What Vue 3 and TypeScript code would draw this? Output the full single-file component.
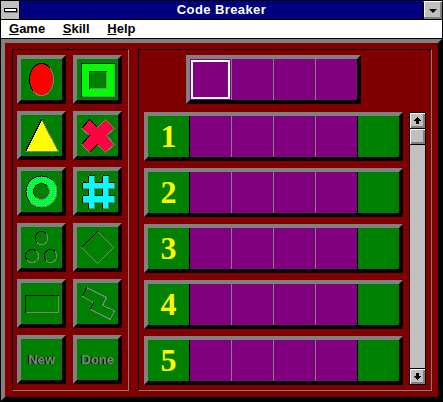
<script setup lang="ts">
const menus = ['Game', 'Skill', 'Help']
const rows = [1, 2, 3, 4, 5]
const cells = [0, 1, 2, 3]
const tools = ['oval', 'square', 'triangle', 'cross', 'ring', 'hash', 'dots', 'diamond', 'rect', 'zig', 'New', 'Done']
const isLabel = (t: string) => t === 'New' || t === 'Done'
</script>

<template>
  <div class="window">
    <div class="titlebar">
      <div class="sysbox"><div class="sysbar"></div></div>
      <div class="title">Code Breaker</div>
      <div class="minbox"><div class="tri"></div></div>
    </div>
    <div class="menubar">
      <span v-for="m in menus" :key="m" class="menu"><u>{{ m[0] }}</u>{{ m.slice(1) }}</span>
    </div>
    <div class="client">
      <div class="panel tools">
        <div v-for="t in tools" :key="t" class="btn">
          <span v-if="isLabel(t)" class="label">{{ t }}</span>
          <svg v-else class="icon" width="41" height="41" viewBox="0 0 41 41">
            <defs>
              <pattern id="pink" width="2" height="2" patternUnits="userSpaceOnUse">
                <rect width="2" height="2" fill="#ff0000" />
                <rect width="1" height="1" fill="#ff00ff" />
              </pattern>
              <pattern id="mint" width="2" height="2" patternUnits="userSpaceOnUse">
                <rect width="2" height="2" fill="#00ff00" />
                <rect width="1" height="1" fill="#00ffff" />
              </pattern>
            </defs>
            <g v-if="t === 'oval'">
              <ellipse cx="20.5" cy="20.5" rx="12" ry="16" fill="#ff0000" stroke="#808080" />
              <path class="k" d="M12 31.8A12 16 0 0 1 29 9.2" />
            </g>
            <g v-else-if="t === 'square'" transform="translate(.5 .5)">
              <path d="M4 4H37V37H4ZM12 12V29H29V12Z" fill="#00ff00" fill-rule="evenodd" />
              <path class="g" d="M37 4V37H4M29 12V29H12" />
              <path class="k" d="M4 37V4H37M12 29V12H29" />
            </g>
            <g v-else-if="t === 'triangle'" transform="translate(.5 .5)">
              <path d="M20 4L37 36H4Z" fill="#ffff00" stroke="#808080" />
              <path class="k" d="M4 36L20 4" />
            </g>
            <g v-else-if="t === 'cross'" transform="translate(.5 .5)">
              <path d="M12 4L20 12L28 4L37 13L29 20L37 29L28 37L20 29L12 37L4 29L12 20L4 13Z" fill="url(#pink)" stroke="#808080" />
              <path class="k" d="M4 13L12 4L20 12M4 29L12 20M20 29L12 37" />
            </g>
            <g v-else-if="t === 'ring'">
              <path d="M5 20.5a15.5 15.5 0 1 0 31 0a15.5 15.5 0 1 0-31 0ZM12.5 20.5a8 8 0 1 1 16 0a8 8 0 1 1-16 0Z" fill="url(#mint)" fill-rule="evenodd" />
              <circle class="g" cx="20.5" cy="20.5" r="15.5" />
              <circle class="g" cx="20.5" cy="20.5" r="8" />
              <path class="k" d="M9.5 31.5A15.5 15.5 0 0 1 31.5 9.5M14.8 26.2A8 8 0 0 1 26.2 14.8" />
            </g>
            <g v-else-if="t === 'hash'" transform="translate(.5 .5)">
              <path
                d="M11 4H17V11H25V4H31V11H37V17H31V24H37V31H31V37H25V31H17V37H11V31H5V24H11V17H5V11H11ZM17 17V24H25V17Z"
                fill="#00ffff" fill-rule="evenodd" stroke="#808080" />
              <path class="k" d="M11 4H17M25 4H31M5 11H11M17 11H25M31 11H37M5 24H11M17 24H25M31 24H37M11 4V11M5 11V17M11 17V24M5 24V31M11 31V37M25 4V11M25 17V24M25 31V37" />
            </g>
            <g v-else-if="t === 'dots'">
              <template v-for="c in [[20.5, 11], [11, 29], [29.5, 29]]" :key="c[0]">
                <circle class="g" :cx="c[0]" :cy="c[1]" r="6.5" />
                <path class="k" :d="`M${c[0] - 4.6} ${c[1] + 4.6}A6.5 6.5 0 0 1 ${c[0] + 4.6} ${c[1] - 4.6}`" />
              </template>
            </g>
            <g v-else-if="t === 'diamond'" transform="translate(.5 .5)">
              <path class="g" d="M20 4L36 20L20 36L4 20Z" />
              <path class="k" d="M4 20L20 4" />
            </g>
            <g v-else-if="t === 'rect'" transform="translate(.5 .5)">
              <path class="g" d="M37 12V29H4" />
              <path class="k" d="M4 29V12H37" />
            </g>
            <g v-else-if="t === 'zig'" transform="translate(.5 .5)">
              <path class="g" d="M9 4L29 14L25 22L37 27L33 36L13 26L16 19L5 13Z" />
              <path class="k" d="M9 4L5 13M16 19L13 26" />
            </g>
          </svg>
        </div>
      </div>
      <div class="panel board">
        <div class="main">
          <div class="code">
            <div class="slots">
              <div v-for="c in cells" :key="c" class="slot" :class="{ selected: c === 0 }"></div>
            </div>
          </div>
          <div v-for="r in rows" :key="r" class="row">
            <div class="num">{{ r }}</div>
            <div class="slots">
              <div v-for="c in cells" :key="c" class="slot"></div>
            </div>
            <div class="score"></div>
          </div>
        </div>
        <div class="scroll">
          <div class="sbtn">
            <svg width="7" height="7" viewBox="0 0 7 7"><path d="M3 0h1v1h1v1h1v1h1v1H5v3H2V4H0V3h1V2h1V1h1Z" /></svg>
          </div>
          <div class="thumb"></div>
          <div class="track"></div>
          <div class="sbtn down">
            <svg width="7" height="7" viewBox="0 0 7 7"><path d="M2 0h3v3h2v1H6v1H5v1H4v1H3V6H2V5H1V4H0V3h2Z" /></svg>
          </div>
        </div>
      </div>
    </div>
  </div>
</template>

<style scoped>
.window {
  width: 443px;
  height: 402px;
  box-sizing: border-box;
  border: 1px solid #000;
  display: flex;
  flex-direction: column;
  font-family: "Liberation Sans", Arial, sans-serif;
  overflow: hidden;
}
.titlebar {
  height: 19px;
  flex-shrink: 0;
  box-sizing: border-box;
  display: flex;
  background: #000080;
  border-bottom: 1px solid #000;
}
.sysbox {
  width: 19px;
  box-sizing: border-box;
  background: #c0c0c0;
  border-right: 1px solid #000;
  display: flex;
  align-items: center;
  justify-content: center;
}
.sysbar {
  width: 13px;
  height: 4px;
  box-sizing: border-box;
  background: #fff;
  border: 1px solid #000;
  box-shadow: 1px 1px 0 #808080;
}
.title {
  flex: 1;
  text-align: center;
  color: #fff;
  font-weight: bold;
  font-size: 13px;
  line-height: 18px;
  letter-spacing: 0.4px;
}
.minbox {
  width: 19px;
  box-sizing: border-box;
  background: #c0c0c0;
  border-left: 1px solid #000;
  border-top: 1px solid #fff;
  box-shadow: inset -2px -2px 0 #808080, inset 1px 0 0 #fff;
  display: flex;
  align-items: center;
  justify-content: center;
}
.tri {
  width: 0;
  height: 0;
  border-left: 4px solid transparent;
  border-right: 4px solid transparent;
  border-top: 4px solid #000;
}
.menubar {
  height: 19px;
  flex-shrink: 0;
  box-sizing: border-box;
  background: #fff;
  border-bottom: 1px solid #000;
  display: flex;
  gap: 17.7px;
  padding-left: 8px;
  font-weight: bold;
  font-size: 13px;
  line-height: 18px;
  color: #000;
}
.client {
  flex: 1;
  box-sizing: border-box;
  display: flex;
  gap: 9px;
  padding: 6px 6px 6px 7px;
  background: #800000;
  border-style: solid;
  border-width: 4px;
  border-color: #808080 #000 #000 #808080;
}
.panel {
  box-sizing: border-box;
  border-style: solid;
  border-width: 1px;
  border-color: #000 #808080 #808080 #000;
}
.tools {
  width: 117px;
  padding: 5px 6px 5px 4px;
  display: grid;
  grid-template-columns: 49px 49px;
  grid-auto-rows: 49px;
  gap: 7px;
}
.btn,
.code,
.row {
  box-sizing: border-box;
  border-style: solid;
  border-width: 4px;
  border-color: #808080 #000 #000 #808080;
}
.btn {
  background: #008000;
  display: flex;
  align-items: center;
  justify-content: center;
}
.icon {
  display: block;
  shape-rendering: crispEdges;
}
.k,
.g {
  fill: none;
}
.k {
  stroke: #000;
}
.g {
  stroke: #808080;
}
.label {
  font-weight: bold;
  font-size: 13px;
  color: #808080;
  text-shadow: -1px 0 0 #000;
}
.board {
  flex: 1;
  display: flex;
  gap: 6px;
  padding: 5px;
}
.main {
  width: 259px;
  display: flex;
  flex-direction: column;
  gap: 7px;
}
.code {
  width: 175px;
  height: 49px;
  margin-left: 42px;
  margin-bottom: 1px;
}
.slots {
  width: 167px;
  height: 41px;
  display: flex;
  gap: 1px;
  background: #808080;
}
.slot {
  flex: 1;
  background: #800080;
}
.slot.selected {
  outline: 2px solid #fff;
  outline-offset: -3px;
}
.row {
  height: 49px;
  display: flex;
}
.num {
  width: 41px;
  background: #008000;
  color: #ffff00;
  font-family: "Liberation Serif", "Times New Roman", serif;
  font-weight: bold;
  font-size: 32px;
  line-height: 40px;
  text-align: center;
  border-right: 1px solid #000;
  box-sizing: content-box;
}
.score {
  width: 41px;
  background: #008000;
  border-left: 1px solid #000;
}
.scroll {
  width: 17px;
  height: 273px;
  margin-top: 57px;
  box-sizing: border-box;
  border: 1px solid #000;
  display: flex;
  flex-direction: column;
  background: #c0c0c0;
}
.sbtn {
  height: 16px;
  flex-shrink: 0;
  box-sizing: border-box;
  background: #c0c0c0;
  border-bottom: 1px solid #000;
  box-shadow: inset 1px 1px 0 #fff, inset -2px -2px 0 #808080;
  display: flex;
  align-items: center;
  justify-content: center;
}
.sbtn.down {
  height: 16px;
  border-bottom: 0;
  border-top: 1px solid #000;
}
.thumb {
  height: 16px;
  flex-shrink: 0;
  box-sizing: border-box;
  border-bottom: 1px solid #000;
  box-shadow: inset 1px 1px 0 #fff, inset -2px -2px 0 #808080;
}
.track {
  flex: 1;
}
</style>
